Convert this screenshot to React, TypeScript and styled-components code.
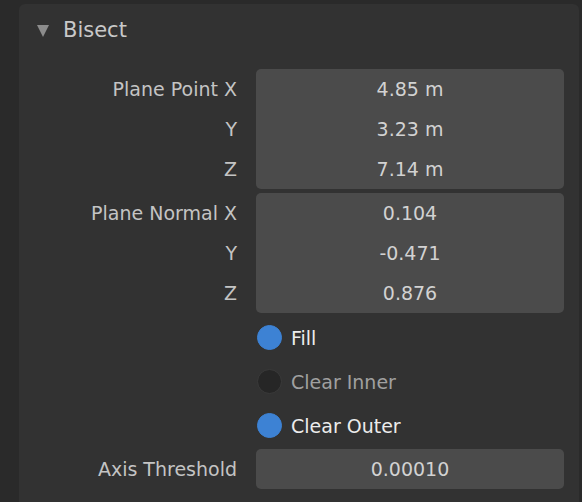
import React from "react";
import styled, { createGlobalStyle } from "styled-components";

type VectorProp = {
  label: string;
  values: string[];
};

const vectors: VectorProp[] = [
  { label: "Plane Point", values: ["4.85 m", "3.23 m", "7.14 m"] },
  { label: "Plane Normal", values: ["0.104", "-0.471", "0.876"] },
];

const axes = ["X", "Y", "Z"];

const toggles = [
  { label: "Fill", on: true },
  { label: "Clear Inner", on: false },
  { label: "Clear Outer", on: true },
];

const App = () => {
  return (
    <>
      <GlobalStyle />
      <Viewport>
        <Panel>
          <PanelHeader>
            <Arrow />
            <PanelTitle>Bisect</PanelTitle>
          </PanelHeader>
          <PropGrid>
            {vectors.map((vec) => (
              <React.Fragment key={vec.label}>
                <LabelStack>
                  {axes.map((axis, i) => (
                    <PropLabel key={axis}>
                      {i === 0 ? `${vec.label} ${axis}` : axis}
                    </PropLabel>
                  ))}
                </LabelStack>
                <FieldGroup>
                  {vec.values.map((v) => (
                    <FieldRow key={v}>{v}</FieldRow>
                  ))}
                </FieldGroup>
              </React.Fragment>
            ))}
            <div />
            <ToggleList>
              {toggles.map((t) => (
                <ToggleRow key={t.label}>
                  <RadioDot $on={t.on} />
                  <ToggleText $on={t.on}>{t.label}</ToggleText>
                </ToggleRow>
              ))}
            </ToggleList>
            <LabelStack>
              <PropLabel>Axis Threshold</PropLabel>
            </LabelStack>
            <FieldGroup>
              <FieldRow>0.00010</FieldRow>
            </FieldGroup>
          </PropGrid>
        </Panel>
      </Viewport>
    </>
  );
};

const GlobalStyle = createGlobalStyle`
  html, body {
    margin: 0;
    padding: 0;
    background: #2a2a2a;
  }
  body {
    font-family: "DejaVu Sans", "Liberation Sans", sans-serif;
  }
`;

const Viewport = styled.div`
  width: 582px;
  height: 502px;
  overflow: hidden;
  background: #2a2a2a;
  padding-top: 4px;
  padding-left: 19px;
  box-sizing: border-box;
`;

const Panel = styled.div`
  width: 560px;
  height: 520px;
  background: #323232;
  border-radius: 6px 6px 0 0;
`;

const PanelHeader = styled.div`
  display: flex;
  align-items: center;
  height: 51px;
  padding-left: 18px;
  padding-bottom: 14px;
`;

const Arrow = styled.span`
  width: 0;
  height: 0;
  border-left: 6.5px solid transparent;
  border-right: 6.5px solid transparent;
  border-top: 12px solid #8c8c8c;
  margin-top: 2px;
`;

const PanelTitle = styled.span`
  margin-left: 14px;
  font-size: 21px;
  color: #c9c9c9;
`;

const PropGrid = styled.div`
  display: grid;
  grid-template-columns: 218px 308px;
  column-gap: 19px;
  row-gap: 4px;
`;

const LabelStack = styled.div`
  display: flex;
  flex-direction: column;
  align-items: flex-end;
`;

const PropLabel = styled.div`
  height: 40px;
  line-height: 41px;
  font-size: 19px;
  color: #c4c4c4;
  white-space: nowrap;
`;

const FieldGroup = styled.div`
  display: flex;
  flex-direction: column;
  background: #4b4b4b;
  border-radius: 5px;
`;

const FieldRow = styled.div`
  height: 40px;
  line-height: 41px;
  text-align: center;
  font-size: 19px;
  color: #d2d2d2;
`;

const ToggleList = styled.div`
  display: flex;
  flex-direction: column;
  margin-top: -2px;
  margin-bottom: -2px;
`;

const ToggleRow = styled.div`
  display: flex;
  align-items: center;
  height: 44px;
  padding-left: 1px;
`;

const RadioDot = styled.span<{ $on: boolean }>`
  width: 25px;
  height: 25px;
  border-radius: 50%;
  box-sizing: border-box;
  background: ${(p) => (p.$on ? "#3d82d4" : "#262626")};
  border: 1px solid ${(p) => (p.$on ? "#3d82d4" : "#3a3a3a")};
`;

const ToggleText = styled.span<{ $on: boolean }>`
  margin-left: 9px;
  font-size: 19px;
  line-height: 22px;
  padding-top: 1px;
  color: ${(p) => (p.$on ? "#ececec" : "#a0a0a0")};
`;

export default App;
